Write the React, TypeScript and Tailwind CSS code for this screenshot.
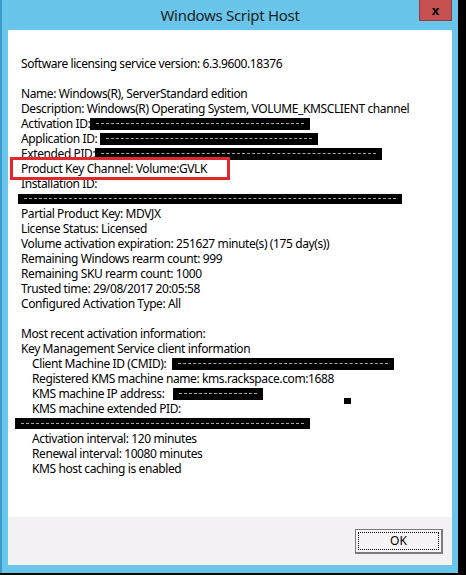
import React from "react";

const font = { fontFamily: '"Segoe UI", "Noto Sans", sans-serif' };

function Bar({ w, h = 12, ml = 0 }: { w: number; h?: number; ml?: number }) {
  return (
    <span
      className="inline-flex items-center bg-black px-[6px] align-middle"
      style={{ width: w, height: h, marginLeft: ml }}
    >
      <span className="block w-full border-t border-dashed border-[#a8a8a8]" />
    </span>
  );
}

function Line({ children, indent = false }: { children?: React.ReactNode; indent?: boolean }) {
  return (
    <div className={`flex h-[15px] items-center whitespace-pre leading-[15px] ${indent ? "pl-[11px]" : ""}`}>
      {children}
    </div>
  );
}

export default function App() {
  return (
    <div className="h-[575px] w-[466px] bg-black" style={font}>
      <div className="flex h-[573px] w-[458px] flex-col border-l-2 border-[#3a9cca] bg-[#69c6ea] pb-[8px] pl-[6px] pr-[6px]">
        <div className="relative flex h-[30px] items-center justify-center">
          <span className="text-[15px] tracking-[-0.3px] text-[#1e1e1e]">Windows Script Host</span>
          <div className="absolute right-0 top-0 flex h-[21px] w-[33px] items-center justify-center border border-[#8a4040] border-t-0 bg-[#c75050]">
            <span className="text-[13px] font-bold leading-none text-black">x</span>
          </div>
        </div>
        <div className="relative flex flex-1 flex-col bg-white">
          <div className="flex-1 pl-[13px] pt-[26px] text-[12px] tracking-[-0.4px] text-black">
            <Line>Software licensing service version: 6.3.9600.18376</Line>
            <Line />
            <Line>Name: Windows(R), ServerStandard edition</Line>
            <Line>Description: Windows(R) Operating System, VOLUME_KMSCLIENT channel</Line>
            <Line>
              Activation ID:<Bar w={220} />
            </Line>
            <Line>
              Application ID: <Bar w={218} />
            </Line>
            <Line>
              Extended PID:<Bar w={287} />
            </Line>
            <Line>Product Key Channel: Volume:GVLK</Line>
            <Line>Installation ID:</Line>
            <Line>
              <Bar w={384} h={10} ml={-3} />
            </Line>
            <Line>Partial Product Key: MDVJX</Line>
            <Line>License Status: Licensed</Line>
            <Line>Volume activation expiration: 251627 minute(s) (175 day(s))</Line>
            <Line>Remaining Windows rearm count: 999</Line>
            <Line>Remaining SKU rearm count: 1000</Line>
            <Line>Trusted time: 29/08/2017 20:05:58</Line>
            <Line>Configured Activation Type: All</Line>
            <Line />
            <Line>Most recent activation information:</Line>
            <Line>Key Management Service client information</Line>
            <Line indent>
              Client Machine ID (CMID):<Bar w={222} ml={6} />
            </Line>
            <Line indent>Registered KMS machine name: kms.rackspace.com:1688</Line>
            <Line indent>
              KMS machine IP address:<Bar w={90} ml={8} />
            </Line>
            <Line indent>KMS machine extended PID:</Line>
            <Line>
              <Bar w={295} h={11} ml={-6} />
            </Line>
            <Line indent>Activation interval: 120 minutes</Line>
            <Line indent>Renewal interval: 10080 minutes</Line>
            <Line indent>KMS host caching is enabled</Line>
          </div>
          <div className="absolute left-[2px] top-[127px] h-[23px] w-[220px] border-[3px] border-[#e3262d]" />
          <div className="absolute left-[336px] top-[368px] h-[6px] w-[7px] bg-black" />
          <div className="flex h-[48px] items-center justify-end bg-[#f4f1f5] pr-[9px]">
            <div className="flex h-[25px] w-[88px] border border-[#7b7b7b] border-b-2 border-r-2 bg-[#f5f3f6] p-[2px]">
              <div className="flex flex-1 items-center justify-center border border-dotted border-black text-[12px] text-black">
                OK
              </div>
            </div>
          </div>
        </div>
      </div>
    </div>
  );
}
